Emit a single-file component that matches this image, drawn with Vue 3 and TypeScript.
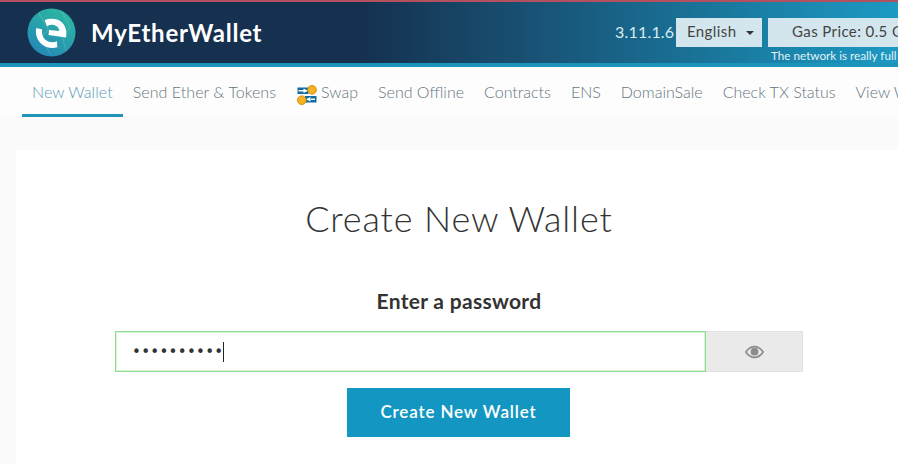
<script setup lang="ts">
const tabs: string[] = ['Send Ether & Tokens']
const after: string[] = ['Send Offline', 'Contracts', 'ENS', 'DomainSale', 'Check TX Status', 'View Wallet Info', 'Help']
</script>

<template>
  <div class="page">
    <header class="top">
      <div class="brand">
        <svg class="logo" viewBox="0 0 50 50" width="50" height="50">
          <defs>
            <linearGradient id="lg" x1="0.8" y1="0" x2="0.2" y2="1">
              <stop offset="0" stop-color="#2cb9a0" />
              <stop offset="1" stop-color="#2387b8" />
            </linearGradient>
          </defs>
          <circle cx="25" cy="25" r="24.5" fill="url(#lg)" />
          <path d="M12 5 L22 22 L14 30 L24 47 M36 4 L44 20 L36 30 L40 44" stroke="#ffffff" stroke-opacity=".14" stroke-width="1.2" fill="none" />
          <path d="M18 12.5 C24 10 32 10.5 36.5 15.5 C40 19.5 40.8 25 39.8 30 L22 27.5 L22.5 22.5 L33 23.5 C32.5 18 26 15.5 20.5 18.5 Z" fill="#fff" />
          <path d="M9.5 20.5 L15.5 22 C14.5 28 17.5 33 22.5 34.5 C25.5 35.3 28 35 30.5 34 L31 40 C27.5 41 24 41 20.5 40 C12.5 37.5 7.5 29 9.5 20.5 Z" fill="#fff" />
        </svg>
        <span class="name">MyEtherWallet</span>
      </div>
      <div class="tools">
        <span class="version">3.11.1.6</span>
        <span class="pick lang">English <i class="caret"></i></span>
        <div class="gas">
          <span class="pick gasbox">Gas Price: 0.5 Gwei</span>
          <span class="note">The network is really full right now. Check Eth Gas Station.</span>
        </div>
      </div>
    </header>

    <nav class="nav">
      <a class="tab wide active">New Wallet</a>
      <a v-for="t in tabs" :key="t" class="tab wide">{{ t }}</a>
      <a class="tab">
        <svg class="swap" viewBox="0 0 20 20" width="20" height="20">
          <rect x="0.5" y="2.5" width="11" height="6.5" fill="#0e6da0" />
          <path d="M6.5 3.5 L11 5.7 L6.5 8 Z M1.5 4.9 H7 V6.5 H1.5 Z" fill="#fff" />
          <rect x="8" y="11" width="11.5" height="6.5" fill="#0e6da0" />
          <path d="M13.5 12 L9 14.3 L13.5 16.5 Z M13 13.5 H18 V15.1 H13 Z" fill="#fff" />
          <circle cx="15" cy="4.8" r="4.3" fill="#f6b321" stroke="#d58a10" stroke-width="1" />
          <circle cx="4.8" cy="15.2" r="4.3" fill="#f6b321" stroke="#d58a10" stroke-width="1" />
        </svg>
        Swap
      </a>
      <a v-for="t in after" :key="t" class="tab">{{ t }}</a>
    </nav>

    <main class="main">
      <section class="card">
        <h1>Create New Wallet</h1>
        <h2>Enter a password</h2>
        <div class="field">
          <div class="input"><span class="dots">••••••••••</span><span class="cursor"></span></div>
          <div class="eye">
            <svg viewBox="0 0 24 16" width="21" height="14">
              <path d="M1 8 C5 2 9 0.8 12 0.8 C15 0.8 19 2 23 8 C19 14 15 15.2 12 15.2 C9 15.2 5 14 1 8 Z" fill="#8b8b8b" />
              <path d="M3.2 8 C6.5 4 9 2.8 12 2.8 C15 2.8 17.5 4 20.8 8 C17.5 12 15 13.2 12 13.2 C9 13.2 6.5 12 3.2 8 Z" fill="#eaeaea" />
              <circle cx="12" cy="7.6" r="4.4" fill="#8b8b8b" />
            </svg>
          </div>
        </div>
        <button class="cta">Create New Wallet</button>
      </section>
    </main>
  </div>
</template>

<style>
html, body { margin: 0; height: 100%; overflow: hidden; background: #fafafa; }
</style>

<style scoped>
.page { width: 898px; height: 464px; overflow: hidden; font-family: Lato, "Open Sans", sans-serif; background: #fafafa; }
.top {
  box-sizing: border-box; height: 67px; display: flex; justify-content: space-between; align-items: flex-start;
  border-top: 2px solid #b5505f; border-bottom: 4px solid #1a93bd;
  background: linear-gradient(90deg, #16304f 0%, #16304f 40%, #1c9ac3 100%);
  padding: 0 0 0 27px; overflow: hidden;
}
.brand { display: flex; align-items: center; gap: 15px; height: 60px; }
.logo { display: block; width: 49px; height: 49px; }
.name { color: #fff; font-size: 24px; font-weight: 700; letter-spacing: .75px; }
.tools { display: flex; align-items: flex-start; padding-top: 16px; width: 283px; flex: none; }
.version { color: #d7ecf3; font-size: 16px; line-height: 28px; width: 61px; flex: none; letter-spacing: .2px; }
.pick { background: #d3e6ed; color: #444; font-size: 15px; letter-spacing: .4px; height: 29px; line-height: 26px; display: block; box-sizing: border-box; white-space: nowrap; }
.lang { width: 86px; padding-left: 11px; flex: none; }
.caret { display: inline-block; border: 4px solid transparent; border-top-color: #333; border-bottom: 0; vertical-align: middle; margin-left: 5px; }
.gas { margin-left: 6px; flex: none; width: 400px; }
.gasbox { padding-left: 24px; }
.note { display: block; color: #e2f2f7; font-size: 11.7px; line-height: 15px; margin-top: 1px; margin-left: 3px; white-space: nowrap; }
.nav { display: flex; height: 50px; padding-left: 22px; white-space: nowrap; overflow: hidden; background: #fdfdfd; }
.tab { box-sizing: border-box; flex: none; height: 50px; padding: 0 10px; line-height: 50px; color: #64757f; font-size: 16px; font-weight: 300; display: flex; align-items: center; }
.tab.wide { letter-spacing: .06px; }
.tab.active { color: #5a9cb8; border-bottom: 3px solid #1f93b8; padding-top: 3px; }
.swap { margin-right: 4px; margin-top: 5px; margin-left: 1px; }
.main { padding: 33px 0 0 16px; }
.card { background: #fff; height: 320px; padding-top: 45px; box-sizing: border-box; width: 886px; display: flex; flex-direction: column; align-items: center; }
h1 { margin: 0; width: 100%; text-align: center; font-size: 36px; font-weight: 300; color: #333; letter-spacing: .85px; line-height: 46px; }
h2 { margin: 46px 0 0; font-size: 21px; font-weight: 700; color: #333; line-height: 28px; letter-spacing: .3px; }
.field { display: flex; margin-top: 16px; width: 688px; height: 41px; }
.input { box-sizing: border-box; flex: none; width: 591px; height: 41px; border: 1px solid #8edc8e; box-shadow: inset 0 0 0 1px rgba(142, 220, 142, .35); display: flex; align-items: center; padding-left: 16px; background: #fff; }
.dots { font-family: "DejaVu Sans", sans-serif; font-size: 15px; color: #333; letter-spacing: .3px; }
.cursor { display: block; width: 1px; height: 20px; background: #222; }
.eye { box-sizing: border-box; flex: 1; background: #eaeaea; border: 1px solid #e2e2e2; border-left: 0; display: flex; align-items: center; justify-content: center; }
.cta { margin: 16px 1px 0 0; width: 223px; height: 49px; border: 0; background: #1397c2; color: #fff; font-family: inherit; font-size: 17px; font-weight: 600; letter-spacing: .85px; padding: 0 0 3px; }
</style>
